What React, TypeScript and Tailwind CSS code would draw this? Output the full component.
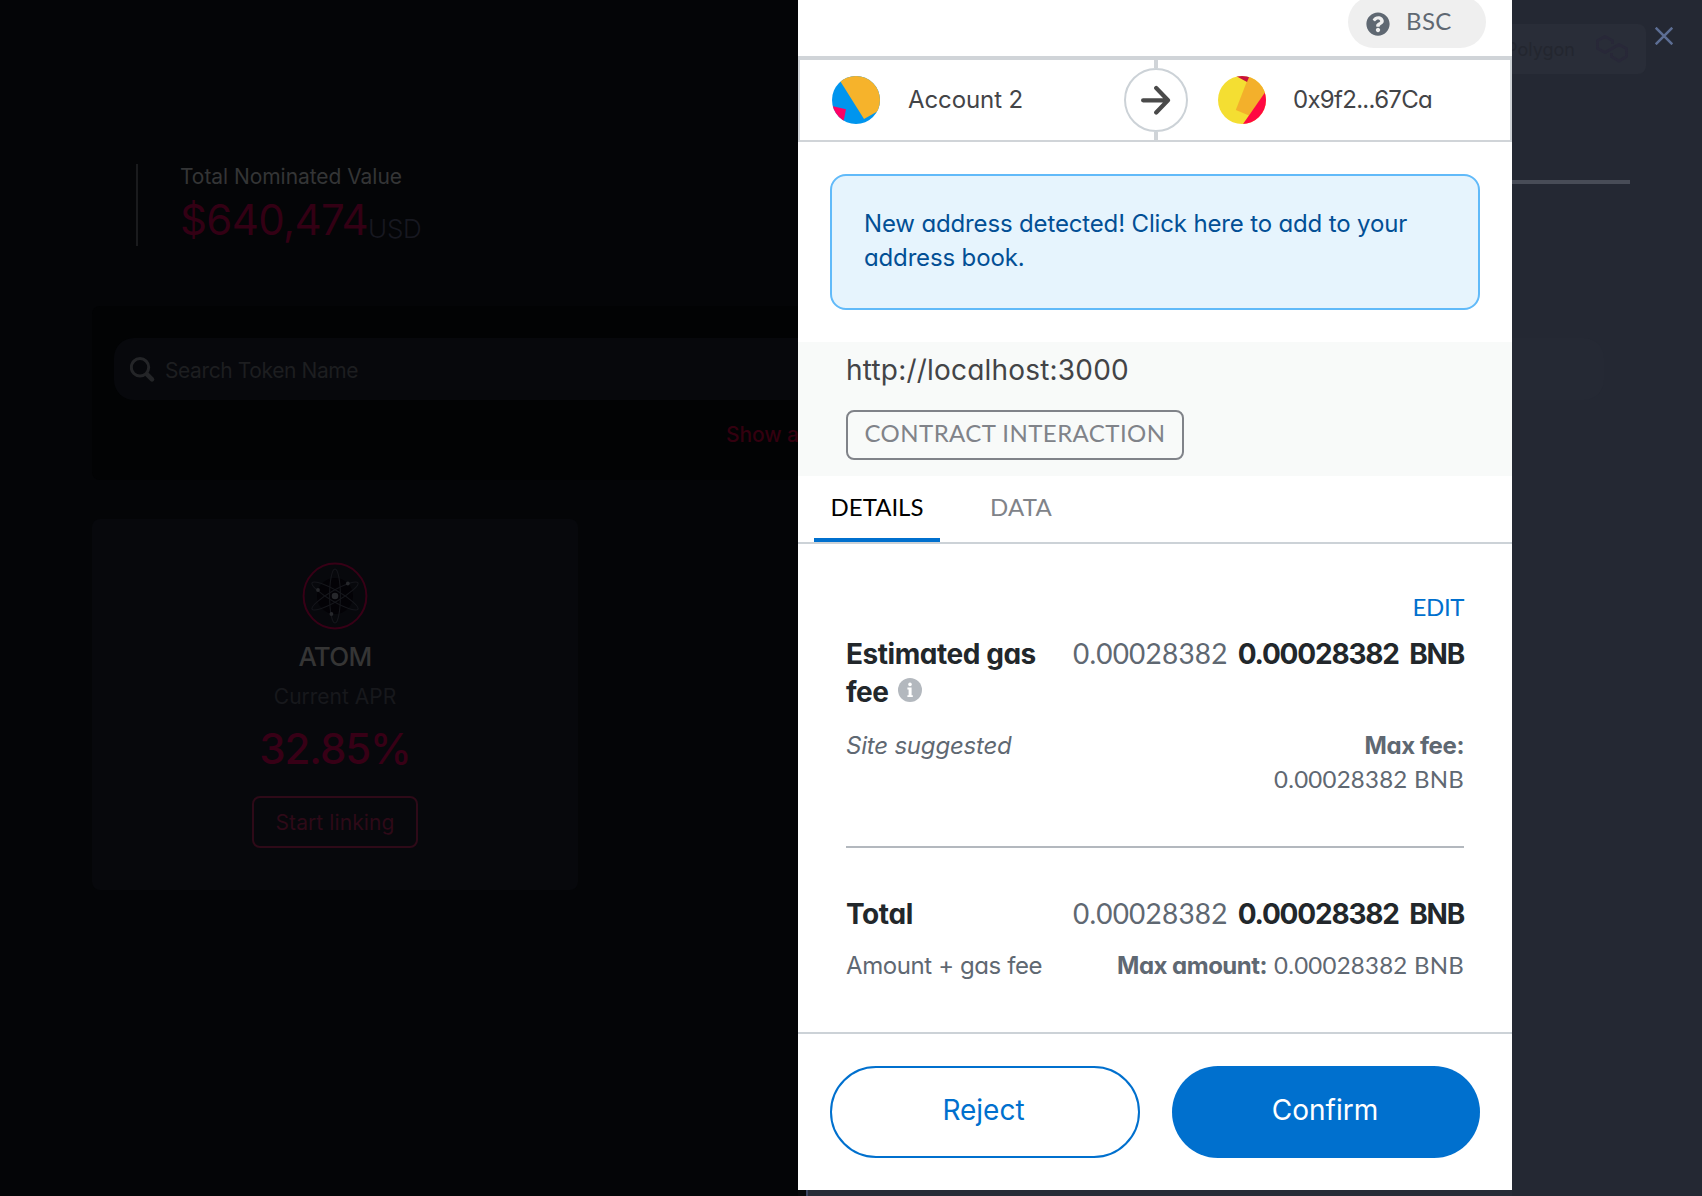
import React from "react";

function QuestionIcon() {
  return (
    <svg width="24" height="24" viewBox="0 0 512 512" fill="#5f6872">
      <path d="M504 256c0 136.997-111.043 248-248 248S8 392.997 8 256C8 119.083 119.043 8 256 8s248 111.083 248 248zM262.655 90c-54.497 0-89.255 22.957-116.549 63.758-3.536 5.286-2.353 12.415 2.715 16.258l34.699 26.31c5.205 3.947 12.621 3.008 16.665-2.122 17.864-22.658 30.113-35.797 57.303-35.797 20.429 0 45.698 13.148 45.698 32.958 0 14.976-12.363 22.667-32.534 33.976C247.128 238.528 216 254.941 216 296v4c0 6.627 5.373 12 12 12h56c6.627 0 12-5.373 12-12v-1.333c0-28.462 83.186-29.647 83.186-106.667 0-58.002-60.165-102-116.531-102zM256 338c-25.365 0-46 20.635-46 46 0 25.364 20.635 46 46 46s46-20.636 46-46c0-25.365-20.635-46-46-46z" />
    </svg>
  );
}

function InfoIcon() {
  return (
    <svg width="24" height="24" viewBox="0 0 24 24" className="mt-[5px]">
      <circle cx="12" cy="12" r="12" fill="#b3b8be" />
      <circle cx="12" cy="6.4" r="1.8" fill="#fff" />
      <path d="M9.4 9.6h4.2v7.6h1.2v1.9H9.4v-1.9h1.2v-5.7H9.4z" fill="#fff" />
    </svg>
  );
}

function SenderAvatar() {
  return (
    <svg width="48" height="48" viewBox="0 0 48 48" className="rounded-full">
      <rect width="48" height="48" fill="#0095ee" />
      <path d="M5 0L32 43L48 34V0z" fill="#f6b32b" />
      <path d="M0 30L14 33.3L11 48H0z" fill="#ff0064" />
    </svg>
  );
}

function RecipientAvatar() {
  return (
    <svg width="48" height="48" viewBox="0 0 48 48" className="rounded-full">
      <rect width="48" height="48" fill="#f4de32" />
      <path d="M31 0L17.8 34L31 39.5L48 16V0z" fill="#f3b02b" />
      <path d="M18 0L29 6L31.5 0z" fill="#c8103c" />
      <path d="M48 15L25 48H48z" fill="#ff0842" />
    </svg>
  );
}

function AtomLogo() {
  return (
    <svg width="66" height="68" viewBox="0 0 66 68" fill="none">
      <ellipse cx="33" cy="34" rx="31.4" ry="32.4" stroke="#370016" strokeWidth="2" />
      <circle cx="33" cy="34" r="18" fill="#030206" />
      <g stroke="#15161b" strokeWidth="1.1">
        <ellipse cx="33" cy="34" rx="5.4" ry="27" />
        <ellipse cx="33" cy="34" rx="5.4" ry="26.5" transform="rotate(60 33 34)" />
        <ellipse cx="33" cy="34" rx="5.4" ry="26.5" transform="rotate(-60 33 34)" />
      </g>
      <g fill="#26272b">
        <circle cx="33" cy="34" r="3.3" />
        <circle cx="45.8" cy="21.5" r="1.9" />
        <circle cx="16" cy="28" r="1.9" />
        <circle cx="29.4" cy="52" r="1.9" />
      </g>
    </svg>
  );
}

function StakingPage() {
  return (
    <main className="flex h-[1196px] w-[798px] shrink-0 flex-col overflow-hidden bg-[#040507] pl-[92px] pt-[164px] font-['Inter',sans-serif]">
      <div className="ml-11 flex h-[82px] w-[400px] shrink-0 flex-col border-l-2 border-[#1a1b1d] pl-[42px] pt-px">
        <div className="text-[21px] leading-[24px] tracking-[-0.05px] text-[#343536]">Total Nominated Value</div>
        <div className="mt-1 flex items-baseline">
          <span className="text-[42px] leading-[54px] tracking-[-0.65px] text-[#330014]">$640,474</span>
          <span className="relative top-[3px] text-[26px] font-light leading-[30px] tracking-[-0.3px] text-[#171820]">USD</span>
        </div>
      </div>

      <section className="mt-[60px] flex h-[174px] w-[1600px] shrink-0 flex-col rounded-lg bg-[#020304] pl-[22px] pt-8">
        <div className="flex h-[62px] w-[1490px] items-center rounded-[20px] bg-[#07080c] pl-4">
          <svg width="26" height="26" viewBox="0 0 26 26" fill="none" stroke="#242528" strokeLinecap="round" className="mt-[2px]">
            <circle cx="10" cy="10.3" r="8.7" strokeWidth="3" />
            <path d="M17 17.3L22 22.4" strokeWidth="4.6" />
          </svg>
          <span className="ml-[9px] mt-[4px] text-[21px] tracking-[-0.4px] text-[#1d1e20]">Search Token Name</span>
        </div>
        <div className="ml-[612px] mt-5 text-[21px] font-medium leading-[30px] tracking-[-0.1px] text-[#33000f]">Show all</div>
      </section>

      <section className="mt-[39px] flex h-[371px] w-[486px] shrink-0 flex-col items-center rounded-lg bg-[#07080c] pt-[43px]">
        <AtomLogo />
        <div className="mt-[11px] text-[26px] font-medium leading-[32px] tracking-[-0.7px] text-[#353535]">ATOM</div>
        <div className="mt-[10px] text-[21px] leading-[28px] text-[#17181c]">Current APR</div>
        <div className="mt-4 text-[42px] font-medium leading-[44px] tracking-[-1.1px] text-[#370016]">32.85%</div>
        <button className="mt-[25px] flex h-[52px] w-[166px] items-center justify-center rounded-lg border-2 border-[#2e0a18] pt-px text-[21px] tracking-[0.1px] text-[#2e0a18]">
          Start linking
        </button>
      </section>
    </main>
  );
}

function BackdropEdge() {
  return (
    <aside className="flex h-[1196px] w-[190px] shrink-0 flex-col overflow-hidden bg-[#242833]">
      <div className="mt-6 flex h-[50px] shrink-0">
        <div className="flex w-[134px] items-center justify-between rounded-r-lg bg-[#292d38] pr-[18px] font-['Inter',sans-serif] text-[18px] text-[#23262f]">
          <span className="-ml-[6px]">Polygon</span>
          <svg width="32" height="28" viewBox="0 0 32 28" fill="none" stroke="#282838" strokeWidth="2.8" strokeLinejoin="round">
            <path d="M16.500 9V5.500L9 1.500L1.500 5.500V13.500L9 17.500L23 9.500L30.500 13.500V21.500L23 26L15.500 21.500V18" />
          </svg>
        </div>
        <svg width="18" height="18" viewBox="0 0 18 18" className="ml-[9px] mt-[3px]" fill="none" stroke="#5d6e94" strokeWidth="2.5">
          <path d="M0.700 0.700L17.300 17.300M17.300 0.700L0.700 17.300" />
        </svg>
      </div>
      <div className="mt-[106px] h-1 w-[118px] shrink-0 bg-[#484c57]" />
      <div className="mt-[154px] h-[62px] w-[92px] shrink-0 rounded-r-[20px] bg-[#252934]" />
    </aside>
  );
}

function Amount() {
  return (
    <div className="flex gap-[10px] whitespace-nowrap text-[28px] leading-[38px]">
      <span className="-mt-px font-['Lato',sans-serif] tracking-[0.2px] text-[#5f6872]">0.00028382</span>
      <span className="font-bold tracking-[-1.2px] text-[#22272b] [word-spacing:5px]">0.00028382 BNB</span>
    </div>
  );
}

function WalletPanel() {
  return (
    <div className="flex h-[1190px] w-[714px] flex-col bg-white font-['Inter',sans-serif] text-[24px] [font-feature-settings:'cv11']">
      <header className="flex h-14 shrink-0 justify-end pr-[26px]">
        <div className="-mt-1 flex h-[52px] w-[138px] items-center rounded-full bg-[#efefef] pl-[18px] pt-1">
          <QuestionIcon />
          <span className="-mt-[7px] ml-[16px] font-['Lato',sans-serif] tracking-[0.4px] text-[#5f6872]">BSC</span>
        </div>
      </header>

      <div className="flex h-[86px] shrink-0 items-center border-x-2 border-b-2 border-t-4 border-[#d0d4d8] text-[#434447]">
        <div className="flex w-[324px] items-center gap-[28px] pl-8">
          <SenderAvatar />
          <span className="tracking-[-0.1px]">Account 2</span>
        </div>
        <div className="flex w-16 flex-col items-center">
          <div className="h-2 w-1 bg-[#d0d4d8]" />
          <div className="flex size-16 items-center justify-center rounded-full border-2 border-[#ccd2d7] bg-white">
            <svg width="30" height="30" viewBox="0 0 30 30" fill="none" stroke="#4a4a4a" strokeWidth="4.2" strokeLinecap="round" strokeLinejoin="round">
              <path d="M2.100 15.300H27M15.200 3L27 15.300L15.200 27.500" />
            </svg>
          </div>
          <div className="h-2 w-1 bg-[#d0d4d8]" />
        </div>
        <div className="flex items-center gap-[27px] pl-[30px]">
          <RecipientAvatar />
          <span className="tracking-[-0.7px]">0x9f2...67Ca</span>
        </div>
      </div>

      <div className="mx-8 mt-8 h-[136px] shrink-0 rounded-2xl border-2 border-[#61baf9] bg-[#e6f4fd] px-8 pt-[31px] leading-[34px] tracking-[-0.15px] text-[#024f95]">
        New address detected! Click here to add to your address book.
      </div>

      <section className="mt-8 flex h-[134px] shrink-0 flex-col items-start bg-[#f8faf9] px-12 pt-2">
        <div className="text-[28px] leading-[40px] tracking-[0.2px] text-[#434447]">http://localhost:3000</div>
        <div className="mt-5 flex h-[50px] w-[338px] items-center justify-center rounded-lg border-2 border-[#808389] pb-1 font-['Lato',sans-serif] tracking-[0.44px] text-[#808389]">
          CONTRACT INTERACTION
        </div>
      </section>

      <nav className="flex h-[68px] shrink-0 gap-[34px] border-b-2 border-[#ccd2d7] pl-4 font-['Lato',sans-serif]">
        <div className="flex h-[66px] w-[126px] items-center justify-center border-b-4 border-[#0070ce] text-black">DETAILS</div>
        <div className="flex h-[62px] items-center px-4 tracking-[0.2px] text-[#808389]">DATA</div>
      </nav>

      <div className="flex shrink-0 flex-col px-12 pt-[46px] text-[#5f6872]">
        <div className="text-right font-['Lato',sans-serif] leading-[34px] tracking-[-0.4px] text-[#0070ce]">EDIT</div>
        <div className="mt-[11px] flex justify-between">
          <div className="text-[28px] font-bold leading-[38px] tracking-[-0.45px] text-[#22272b]">
            <div>Estimated gas</div>
            <div className="flex items-start gap-[9px]">
              fee <InfoIcon />
            </div>
          </div>
          <Amount />
        </div>
        <div className="mt-[17px] flex justify-between leading-[34px]">
          <span className="pt-px italic tracking-[-0.2px]">Site suggested</span>
          <div className="text-right">
            <div className="pt-px font-bold tracking-[-0.4px]">Max fee:</div>
            <div className="-mt-px font-['Lato',sans-serif] tracking-[0.25px]">0.00028382 BNB</div>
          </div>
        </div>
        <div className="mt-[50px] h-[2px] bg-[#b3b8be]" />
        <div className="mt-[47px] flex justify-between">
          <span className="text-[28px] font-bold leading-[38px] tracking-[-0.4px] text-[#22272b]">Total</span>
          <Amount />
        </div>
        <div className="mt-[15px] flex h-[34px] justify-between leading-[34px]">
          <span className="pt-px tracking-[-0.4px]">Amount + gas fee</span>
          <div className="flex gap-[7px]">
            <span className="pt-px font-bold tracking-[-0.5px]">Max amount:</span>
            <span className="font-['Lato',sans-serif] tracking-[0.25px]">0.00028382 BNB</span>
          </div>
        </div>
      </div>

      <footer className="mt-[50px] flex gap-8 border-t-2 border-[#ccd2d7] px-8 pt-8 text-[28px]">
        <button className="flex h-[92px] w-[310px] items-center justify-center rounded-full border-2 border-[#0070ce] pb-1 pr-[3px] text-[#0070ce]">Reject</button>
        <button className="flex h-[92px] flex-1 items-center justify-center rounded-full bg-[#0070ce] pb-1 pr-[2px] text-white">Confirm</button>
      </footer>
    </div>
  );
}

export default function App() {
  return (
    <div className="flex h-[1196px] w-[1702px] overflow-hidden bg-[#242833]">
      <StakingPage />
      <div className="flex h-[1196px] w-[714px] shrink-0 flex-col">
        <WalletPanel />
        <div className="flex h-[6px] bg-[#272b36]">
          <div className="w-2 bg-[#08090b]" />
          <div className="w-[2px] bg-[#3b4460]" />
        </div>
      </div>
      <BackdropEdge />
    </div>
  );
}
